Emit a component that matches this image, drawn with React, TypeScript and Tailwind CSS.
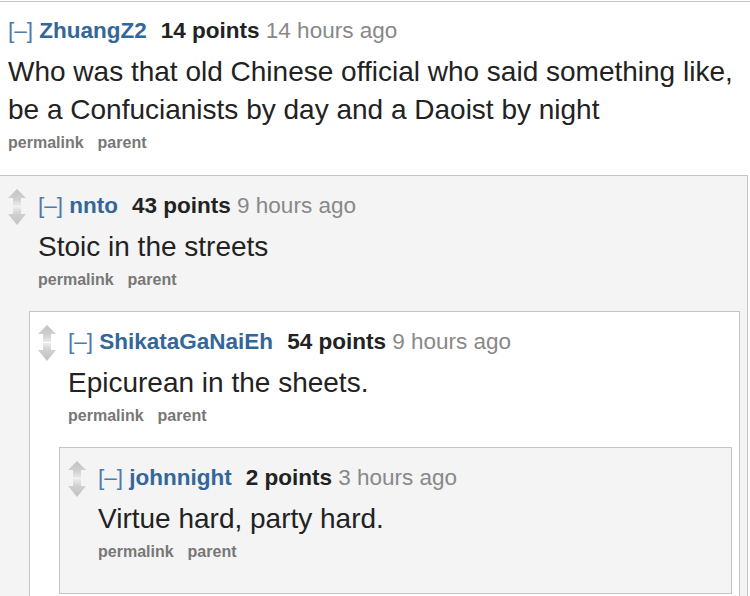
import React from "react";

type Comment = {
  author: string;
  points: number;
  time: string;
  body: string;
  children?: Comment[];
};

const thread: Comment = {
  author: "nnto",
  points: 43,
  time: "9 hours ago",
  body: "Stoic in the streets",
  children: [
    {
      author: "ShikataGaNaiEh",
      points: 54,
      time: "9 hours ago",
      body: "Epicurean in the sheets.",
      children: [
        {
          author: "johnnight",
          points: 2,
          time: "3 hours ago",
          body: "Virtue hard, party hard.",
        },
      ],
    },
  ],
};

function Arrows() {
  return (
    <svg width="20" height="38" viewBox="0 0 20 38" className="shrink-0">
      <defs>
        <linearGradient id="up" x1="0" y1="0" x2="0" y2="1">
          <stop offset="0" stopColor="#c2c2c2" />
          <stop offset="0.6" stopColor="#d0d0d0" />
          <stop offset="1" stopColor="#ececec" />
        </linearGradient>
        <linearGradient id="down" x1="0" y1="0" x2="0" y2="1">
          <stop offset="0" stopColor="#ececec" />
          <stop offset="0.4" stopColor="#d0d0d0" />
          <stop offset="1" stopColor="#c2c2c2" />
        </linearGradient>
      </defs>
      <polygon points="10,0 19,9 14,9 14,17 6,17 6,9 1,9" fill="url(#up)" />
      <polygon points="6,18 14,18 14,25 19,25 10,36 1,25 6,25" fill="url(#down)" />
    </svg>
  );
}

function Header({ c }: { c: Comment }) {
  return (
    <div className="text-[22.5px] leading-[28px] whitespace-nowrap">
      <span className="text-[#4d7bab]">[–]</span>{" "}
      <span className="font-bold text-[#336699]">{c.author}</span>
      <span className="ml-[14px] font-bold text-[#222]">{c.points} points</span>{" "}
      <span className="text-[#888]">{c.time}</span>
    </div>
  );
}

function Links() {
  return (
    <div className="mt-[4px] flex gap-[14px] text-[16px] leading-[20px] font-bold text-[#777]">
      <span>permalink</span>
      <span>parent</span>
    </div>
  );
}

function Box({ c, depth }: { c: Comment; depth: number }) {
  const bg = depth % 2 === 0 ? "bg-[#f4f4f4]" : "bg-white";
  return (
    <div className={`border border-[#c4c4c4] ${bg} pl-[7px] pt-[16px] pb-[10px]`}>
      <div className="flex gap-[11px]">
        <div className="-mt-[3px]">
          <Arrows />
        </div>
        <div>
          <Header c={c} />
          <div className="mt-2 text-[28px] leading-[38px] text-[#222]">{c.body}</div>
          <div className="mb-[21px]">
            <Links />
          </div>
        </div>
      </div>
      {c.children?.map((child) => (
        <div key={child.author} className="ml-[22px] mr-[7px]">
          <Box c={child} depth={depth + 1} />
        </div>
      ))}
    </div>
  );
}

export default function App() {
  return (
    <div className="w-[750px] h-[596px] overflow-hidden bg-white font-['Liberation_Sans',Arial,sans-serif]">
      <div className="mt-px border-t border-[#c4c4c4] pl-2 pt-[15px]">
        <div className="text-[22.5px] leading-[28px] whitespace-nowrap">
          <span className="text-[#4d7bab]">[–]</span>{" "}
          <span className="font-bold text-[#336699]">ZhuangZ2</span>
          <span className="ml-[14px] font-bold text-[#222]">14 points</span>{" "}
          <span className="text-[#888]">14 hours ago</span>
        </div>
        <div className="mt-2 text-[28px] leading-[38px] text-[#222] whitespace-nowrap">
          Who was that old Chinese official who said something like,
          <br />
          be a Confucianists by day and a Daoist by night
        </div>
        <div className="mb-[22px]">
          <Links />
        </div>
      </div>
      <div className="-ml-px mr-[2px]">
        <Box c={thread} depth={0} />
      </div>
    </div>
  );
}
